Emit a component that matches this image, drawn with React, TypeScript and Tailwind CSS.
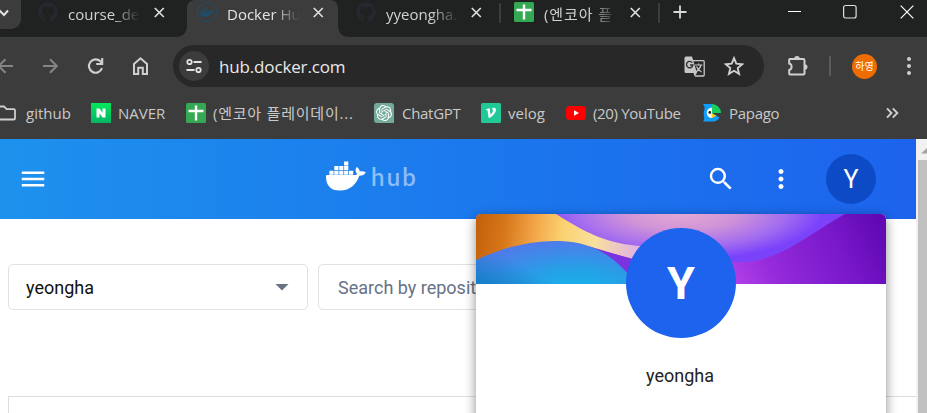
import React from "react";
import { FaGithub, FaDocker } from "react-icons/fa";
import { SiOpenai } from "react-icons/si";
import { MdMenu, MdSearch, MdMoreVert } from "react-icons/md";

const uiFont = "font-['Open_Sans','Noto_Sans_CJK_KR',sans-serif]";

function CloseMark({ className }: { className: string }) {
  return (
    <svg className={`h-[11px] w-[11px] shrink-0 ${className}`} viewBox="0 0 11 11" stroke="#dedede" strokeWidth="1.7">
      <path d="M.8 1l9 9M9.800 1l-9 9" />
    </svg>
  );
}

function SheetIcon({ className }: { className: string }) {
  return (
    <svg className={`h-5 w-5 shrink-0 ${className}`} viewBox="0 0 20 20">
      <rect width="20" height="20" rx="1.5" fill="#34a853" />
      <path d="M10 2.5v15M2.5 8h15" stroke="#fff" strokeWidth="2.4" />
    </svg>
  );
}

function TabTitle({ className, children }: { className: string; children: React.ReactNode }) {
  return (
    <span
      className={`shrink-0 whitespace-nowrap text-[15px] leading-5 [mask-image:linear-gradient(to_right,#000_62%,transparent)] ${className}`}
    >
      {children}
    </span>
  );
}

function TabStrip() {
  return (
    <div className="flex h-[37px] items-start bg-[#1f2221] text-[#d0d2d1]">
      <div className="flex h-[29px] w-[21px] shrink-0 rounded-br-[10px] bg-[#3c3c3c] pt-[9px]">
        <svg className="h-[8px] w-[9px]" viewBox="0 0 9 8" fill="none" stroke="#e3e3e3" strokeWidth="2">
          <path d="M-1 1l5 5 4-4.5" />
        </svg>
      </div>
      <FaGithub className="mt-[2px] ml-[17px] h-5 w-5 shrink-0 text-[#24292f]" />
      <TabTitle className="mt-[4px] ml-[10px] w-[72px]">course_de</TabTitle>
      <CloseMark className="mt-[7px] ml-[14px]" />
      <svg className="mt-[25px] ml-[10px] h-3 w-3 shrink-0" viewBox="0 0 12 12">
        <path d="M12 0v12H0C8 12 12 8 12 0z" fill="#3c3c3c" />
      </svg>
      <div className="flex h-[37px] w-[151px] shrink-0 items-start rounded-tl-[8px] rounded-tr-[8px] bg-[#3c3c3c]">
        <div className="mt-[2px] ml-[10px] flex h-5 w-5 shrink-0 items-center justify-center rounded-full border border-[#1f4c69]">
          <FaDocker className="h-[14px] w-[14px] text-[#1f4c69]" />
        </div>
        <TabTitle className="mt-[4px] ml-[10px] w-[73px] text-[#e3e3e3]">Docker Hu</TabTitle>
        <CloseMark className="mt-[7px] ml-[13px]" />
      </div>
      <svg className="mt-[25px] h-3 w-3 shrink-0" viewBox="0 0 12 12">
        <path d="M0 0v12h12C4 12 0 8 0 0z" fill="#3c3c3c" />
      </svg>
      <FaGithub className="mt-[2px] ml-[6px] h-5 w-5 shrink-0 text-[#24292f]" />
      <TabTitle className="mt-[4px] ml-[10px] w-[73px]">yyeongha.</TabTitle>
      <CloseMark className="mt-[7px] ml-[12px]" />
      <div className="mt-[3px] ml-[17px] h-5 w-[2px] shrink-0 rounded bg-[#3c3c3c]" />
      <SheetIcon className="mt-[2px] ml-[13px]" />
      <TabTitle className="mt-[4px] ml-[10px] w-[73px] tracking-[0.9px]">(엔코아 플</TabTitle>
      <CloseMark className="mt-[7px] ml-[13px]" />
      <div className="mt-[3px] ml-[17px] h-5 w-[2px] shrink-0 rounded bg-[#3c3c3c]" />
      <svg className="mt-[5px] ml-[13px] h-[14px] w-[14px] shrink-0" viewBox="0 0 14 14" stroke="#d8d8d8" strokeWidth="1.8">
        <path d="M7 .5v13M.5 7h13" />
      </svg>
      <svg className="mt-[4px] ml-[101px] h-[15px] w-[13px] shrink-0" viewBox="0 0 13 15">
        <path d="M0 7.5h13" stroke="#fff" />
      </svg>
      <svg className="mt-[4px] ml-[42px] h-[15px] w-[14px] shrink-0" viewBox="0 0 14 15" fill="none" stroke="#e0e0e0">
        <rect x=".6" y="1.5" width="12.5" height="12.5" rx="2" strokeWidth="1.2" />
      </svg>
      <svg className="mt-[5px] ml-[43px] h-[14px] w-[14px] shrink-0" viewBox="0 0 14 14" stroke="#fff" strokeWidth="1.2">
        <path d="M.7.7l12.6 12.6M13.3.7L.7 13.3" />
      </svg>
    </div>
  );
}

function AddressRow() {
  return (
    <div className="flex h-[58px] items-center">
      <svg className="h-[18px] w-[14px] shrink-0" viewBox="0 0 14 18" fill="none" stroke="#858585" strokeWidth="2">
        <path d="M13 9H-1M5.500 2.200L-1.300 9l6.800 6.800" />
      </svg>
      <svg className="ml-[29px] h-[18px] w-[16px] shrink-0" viewBox="0 0 16 18" fill="none" stroke="#858585" strokeWidth="2">
        <path d="M0 9h13.500M7 2.200L13.800 9 7 15.800" />
      </svg>
      <svg className="ml-[28px] h-[18px] w-[18px] shrink-0" viewBox="0 0 18 18" fill="none" stroke="#cfcfcf" strokeWidth="2.100">
        <path d="M15 11.200A6.700 6.700 0 1 1 13.400 4.300L15 6" />
        <path d="M15.200 1v6h-6" />
      </svg>
      <svg className="ml-[27px] h-[20px] w-[18px] shrink-0" viewBox="0 0 18 20" fill="none" stroke="#cfcfcf" strokeWidth="2">
        <path d="M2 8l6.500-5.700L15 8v10h-4.200v-6.200H6.200V18H2z" />
      </svg>
      <div className="ml-[23px] flex h-[42px] w-[591px] shrink-0 items-center rounded-full bg-[#282828]">
        <div className="ml-[6px] flex h-[30px] w-[30px] shrink-0 items-center justify-center rounded-full bg-[#3c3c3c]">
          <svg className="h-4 w-4" viewBox="0 0 16 16" fill="none" stroke="#e3e3e3" strokeWidth="1.800">
            <circle cx="3.500" cy="4" r="2.200" />
            <circle cx="12.500" cy="12" r="2.200" />
            <path d="M7.500 4H15.500M.5 12h8" />
          </svg>
        </div>
        <span className="ml-[10px] w-[445px] pt-[2px] text-[17px] leading-6 tracking-[-0.15px] text-[#e8e8e8]">hub.docker.com</span>
        <svg className="ml-[20px] h-[21px] w-[21px] shrink-0" viewBox="0 0 21 21">
          <path d="M8 4.700h11.200a1 1 0 0 1 1 1V19a1 1 0 0 1-1 1H11" fill="none" stroke="#c7c7c7" strokeWidth="1.300" />
          <path d="M2 .5h6L13 17H2a1.500 1.500 0 0 1-1.500-1.500V2A1.500 1.500 0 0 1 2 .5zM9.500 17H13l-2.500 3.200z" fill="#c7c7c7" />
          <path d="M8.300 6.700A3.200 3.200 0 1 0 8.900 9H6" fill="none" stroke="#303030" strokeWidth="1.400" />
          <path d="M11 9h7.500M14.700 7.500V9M17 9c-.7 3-2.500 5.200-5 7M12.500 10.500c1 2.500 2.700 4.300 5 5.500" fill="none" stroke="#c7c7c7" strokeWidth="1.200" />
        </svg>
        <svg className="ml-[19px] h-[20px] w-[20px] shrink-0" viewBox="0 0 20 20" fill="none" stroke="#cfcfcf" strokeWidth="1.900">
          <path d="M10 2.200l2.300 5.500 6 .5-4.600 3.900 1.400 5.800L10 14.800l-5.100 3.100 1.400-5.800-4.600-3.900 6-.5z" />
        </svg>
      </div>
      <svg className="ml-[23px] h-[22px] w-[22px] shrink-0" viewBox="0 0 22 22">
        <path
          d="M3 4h13.200a1.300 1.300 0 0 1 1.300 1.300v12.900a1.300 1.300 0 0 1-1.300 1.300H3a.8.8 0 0 1-.8-.8v-3.600c3.200-.7 3.200-5.900 0-6.600V4.800A.8.8 0 0 1 3 4z"
          fill="none"
          stroke="#cfcfcf"
          strokeWidth="2"
        />
        <path d="M7.200 4a2.800 3 0 0 1 5.600 0zM17.500 9.200a3 2.800 0 0 1 0 5.600z" fill="#cfcfcf" />
      </svg>
      <div className="ml-[20px] h-5 w-[2px] shrink-0 rounded bg-[#5c5c5c]" />
      <div className="ml-[21px] flex h-[25px] w-[25px] shrink-0 items-center justify-center rounded-full bg-[#ef6c00] text-[10px] text-white">
        하영
      </div>
      <svg className="ml-[29px] h-[20px] w-[6px] shrink-0 fill-[#cfcfcf]" viewBox="0 0 6 20">
        <circle cx="3" cy="3" r="2" />
        <circle cx="3" cy="10" r="2" />
        <circle cx="3" cy="17" r="2" />
      </svg>
    </div>
  );
}

function BookmarkBar() {
  return (
    <div className="flex h-[44px] items-center pb-[9px] whitespace-nowrap text-[15px] leading-5 text-[#c9c9c9]">
      <svg className="h-[18px] w-4 shrink-0" viewBox="0 0 16 18" fill="none" stroke="#cfcfcf" strokeWidth="1.800">
        <path d="M-1 2.500h5l2.500 2.700h7.200a1.300 1.300 0 0 1 1.300 1.300v7.700a1.300 1.300 0 0 1-1.300 1.300H-1" />
      </svg>
      <span className="ml-[10px] w-[65px] shrink-0">github</span>
      <svg className="h-5 w-5 shrink-0" viewBox="0 0 20 20">
        <defs>
          <linearGradient id="naver" x2="0" y2="1">
            <stop stopColor="#03e85c" />
            <stop offset="1" stopColor="#03b565" />
          </linearGradient>
        </defs>
        <rect width="20" height="20" fill="url(#naver)" />
        <path d="M5.500 5.500h3l3 4.300V5.500h3v9h-3l-3-4.300v4.300h-3z" fill="#fff" />
      </svg>
      <span className="ml-[7px] w-[68px] shrink-0">NAVER</span>
      <SheetIcon className="" />
      <span className="ml-[7px] w-[161px] shrink-0 tracking-[0.78px]">(엔코아 플레이데이...</span>
      <div className="flex h-5 w-5 shrink-0 items-center justify-center rounded-tl-[3px] rounded-tr-[3px] rounded-bl-[3px] bg-[#74aa9c]">
        <SiOpenai className="h-4 w-4 text-white" />
      </div>
      <span className="ml-[8px] w-[79px] shrink-0 tracking-[-0.3px]">ChatGPT</span>
      <svg className="h-5 w-5 shrink-0" viewBox="0 0 20 20">
        <rect width="20" height="20" rx="1.500" fill="#20c997" />
        <path d="M5 6.300l3.700-1 .9 6.500c1.700-1.700 2.700-3.600 2.300-4.700-.2-.5-.6-.6-1-.9.300-1 1.200-1.500 2.200-1.400 1.300.1 2.100 1 1.800 2.700-.5 2.700-3.200 5.300-6 7.200H7.500L6.500 7.200H5z" fill="#fff" />
      </svg>
      <span className="ml-[7px] w-[58px] shrink-0">velog</span>
      <svg className="h-5 w-5 shrink-0" viewBox="0 0 20 20">
        <rect y="3" width="20" height="14" rx="3.500" fill="#f00" />
        <path d="M8 7.200v5.600l5-2.800z" fill="#fff" />
      </svg>
      <span className="ml-[7px] w-[110px] shrink-0 tracking-[-0.33px]">(20) YouTube</span>
      <svg className="h-[18px] w-[18px] shrink-0" viewBox="0 0 18 18">
        <path d="M0 0h10v17.500H0C2.500 14.500.500 13 .700 9.500.900 6 3 4 0 0z" fill="#109dfc" />
        <path d="M10 17.500c3 0 5-1.500 6.500-4L9 9z" fill="#109dfc" />
        <path d="M9 0a9 9 0 0 1 9 9H9z" fill="#19ce60" />
        <path d="M9 3.500a5.300 5.300 0 0 0 0 10.600z" fill="#fff" />
        <path d="M8.500 9l5 2.800L8.500 14.200z" fill="#ffcd00" />
        <circle cx="6.800" cy="8.400" r="1.300" fill="#111" />
      </svg>
      <span className="ml-[8px] w-[157px] shrink-0 tracking-[-0.3px]">Papago</span>
      <svg className="h-[12px] w-[13px] shrink-0" viewBox="0 0 13 12" fill="none" stroke="#cfcfcf" strokeWidth="1.900">
        <path d="M1 1.300L5.500 6 1 10.700M6.800 1.300L11.300 6l-4.500 4.700" />
      </svg>
    </div>
  );
}

function HubHeader() {
  return (
    <header className="flex h-20 items-center bg-linear-to-r from-[#1e91ed] via-[#1c79ed] to-[#1d63ed] text-white">
      <MdMenu className="ml-[18px] h-[30px] w-[30px] shrink-0" />
      <div className="ml-[278px] flex h-[36px] w-[97px] shrink-0 items-start">
        <svg className="h-[30px] w-[40px] shrink-0" viewBox="0 0 40 30" fill="#fff">
          <path d="M0 15.500C0 14.700.4 14.100 1.200 14.100H28c1.500 0 2.500-.4 3.300-1.200-2.200-1.800-2.300-4.800-.6-7 1.900 1 2.800 2.600 3 4.400 2.100-.4 4.500-.1 6.100.9-1 2.300-3.400 3.500-6.500 3.600C30.500 23 24.500 29.600 13.700 29.600 4.500 29.600 0 24.300 0 15.500z" />
          <path d="M3.400 9.700h4.200v4H3.400zM8.300 9.700h4.200v4H8.300zM13.200 9.700h4.200v4h-4.200zM18.100 9.700h4.200v4h-4.200zM23 9.700h4.200v4H23zM8.300 5.100h4.200v4H8.300zM13.200 5.100h4.200v4h-4.200zM18.100 5.100h4.200v4h-4.200zM18.100.4h4.200v4h-4.200z" />
        </svg>
        <span className="ml-[5px] font-['Lato',sans-serif] text-[24px] leading-[32px] font-semibold tracking-[2.2px] text-white/50">hub</span>
      </div>
      <MdSearch className="ml-[283px] h-[30px] w-[30px] shrink-0" />
      <MdMoreVert className="ml-[30px] h-[30px] w-[30px] shrink-0" />
      <div className="ml-[30px] flex h-[50px] w-[50px] shrink-0 items-center justify-center rounded-full bg-[#0d4bc6] text-[25px] leading-none font-normal">
        Y
      </div>
    </header>
  );
}

function ProfileMenu() {
  return (
    <div className="absolute top-[75px] left-[476px] h-[220px] w-[410px] overflow-hidden rounded-[5px] bg-white shadow-[0_3px_12px_rgba(0,0,0,0.45)]">
      <svg className="block h-[70px] w-[410px]" viewBox="0 0 410 70">
        <defs>
          <linearGradient id="warm" gradientUnits="userSpaceOnUse" x1="0" y1="15" x2="165" y2="35">
            <stop stopColor="#c4610c" />
            <stop offset=".17" stopColor="#d67718" />
            <stop offset=".35" stopColor="#f2a548" />
            <stop offset=".52" stopColor="#fbd270" />
            <stop offset=".72" stopColor="#f8e09c" />
            <stop offset="1" stopColor="#dfafe8" />
          </linearGradient>
          <radialGradient id="lilac" gradientUnits="userSpaceOnUse" cx="0" cy="0" r="1" gradientTransform="translate(205 -4) scale(142 50)">
            <stop stopColor="#e8acd2" />
            <stop offset=".4" stopColor="#d194d7" />
            <stop offset=".75" stopColor="#a36cf0" />
            <stop offset="1" stopColor="#7a43fa" />
          </radialGradient>
          <linearGradient id="violet" gradientUnits="userSpaceOnUse" x1="250" y1="70" x2="400" y2="0">
            <stop stopColor="#b743eb" />
            <stop offset=".3" stopColor="#942adb" />
            <stop offset=".7" stopColor="#7919ca" />
            <stop offset="1" stopColor="#6108b4" />
          </linearGradient>
          <radialGradient id="sea" gradientUnits="userSpaceOnUse" cx="0" cy="0" r="1" gradientTransform="translate(100 76) scale(120 50)">
            <stop stopColor="#16b4ea" />
            <stop offset=".45" stopColor="#279fe7" />
            <stop offset="1" stopColor="#507aea" />
          </radialGradient>
          <linearGradient id="shore" x1="0" y1="1" x2=".4" y2=".8">
            <stop stopColor="#137fc6" />
            <stop offset="1" stopColor="#137fc6" stopOpacity="0" />
          </linearGradient>
        </defs>
        <path d="M0 0h410v70H0z" fill="url(#violet)" />
        <path d="M0 0h90c35 20 60 33 90 33l-22 12-48-12v37H0z" fill="url(#warm)" />
        <path d="M80 0c30 19 52 30 85 32 40 5 70 18 103 16C305 46 330 22 369 0z" fill="url(#lilac)" />
        <path d="M112 32l44 13 12 25h-28z" fill="#7b32df" />
        <path d="M0 46c30-14 58-20 84-19 30 1 50 12 70 35l5 8H0z" fill="url(#sea)" />
        <path d="M0 46c30-14 58-20 84-19 30 1 50 12 70 35l5 8H0z" fill="url(#shore)" />
      </svg>
      <div className="relative mx-auto -mt-[56px] flex h-[110px] w-[110px] items-center justify-center rounded-full bg-[#1d63ed] text-[45px] leading-none font-bold text-white">
        Y
      </div>
      <div className="mt-[26px] pr-[2px] text-center text-[18px] leading-6 text-[#222]">yeongha</div>
    </div>
  );
}

export default function App() {
  return (
    <div className={`h-[413px] w-[927px] overflow-hidden bg-white ${uiFont}`}>
      <TabStrip />
      <div className="h-[102px] bg-[#3c3c3c]">
        <AddressRow />
        <BookmarkBar />
      </div>
      <div className="relative flex h-[274px] font-['Roboto',sans-serif]">
        <main className="w-[916px] shrink-0">
          <HubHeader />
          <div className="mt-[45px] flex gap-[10px] pl-2 text-[18px]">
            <div className="flex h-[46px] w-[300px] shrink-0 items-center justify-between rounded-[5px] border border-[#e0e1e3] pr-[18px] pl-[17px] text-[#111]">
              yeongha
              <svg className="h-[7px] w-[14px]" viewBox="0 0 14 7" fill="#677285">
                <path d="M.5 0h13L7 6.500z" />
              </svg>
            </div>
            <div className="flex h-[46px] w-[400px] items-center rounded-[5px] border border-[#e0e1e3] pl-[19px] text-[#677285]">
              Search by repository name
            </div>
          </div>
          <div className="mt-[86px] ml-2 h-[20px] border-t border-l border-[#dcdddf]" />
        </main>
        <div className="flex w-[11px] flex-col bg-[#f1f1f1]">
          <svg className="mt-[9px] h-[6px] w-[11px]" viewBox="0 0 11 6">
            <path d="M5 5.500L11 0v5.500z" fill="#a3a3a3" />
          </svg>
          <div className="mt-[6px] ml-[2px] flex-1 bg-[#c1c1c1]" />
        </div>
        <ProfileMenu />
      </div>
    </div>
  );
}
